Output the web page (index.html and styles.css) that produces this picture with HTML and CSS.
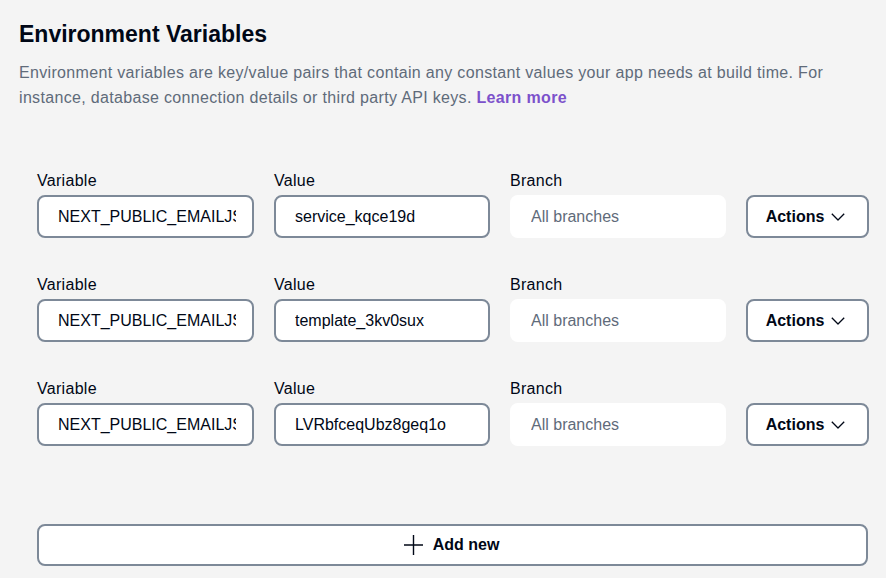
FILE: index.html
```html
<!DOCTYPE html>
<html lang="en">
<head>
<meta charset="utf-8">
<title>Environment Variables</title>
<link rel="stylesheet" href="styles.css">
</head>
<body>
<main class="page">
  <h2 class="title">Environment Variables</h2>
  <p class="desc">Environment variables are key/value pairs that contain any constant values your app needs at build time. For instance, database connection details or third party API keys. <a href="#" class="link">Learn more</a></p>

  <div class="rows">
    <div class="row">
      <div class="field"><label class="label">Variable</label><input class="input" type="text" value="NEXT_PUBLIC_EMAILJS_SERVICE_ID"></div>
      <div class="field"><label class="label">Value</label><input class="input" type="text" value="service_kqce19d"></div>
      <div class="field"><label class="label">Branch</label><input class="input branch" type="text" placeholder="All branches"></div>
      <div class="field action-field"><button class="actions">Actions <svg class="chev" width="14" height="8" viewBox="0 0 14 8"><path d="M0.8 0.8l6.2 6.2 6.2-6.2" fill="none" stroke="#000716" stroke-width="1.3" stroke-linejoin="round"/></svg></button></div>
    </div>
    <div class="row">
      <div class="field"><label class="label">Variable</label><input class="input" type="text" value="NEXT_PUBLIC_EMAILJS_TEMPLATE_ID"></div>
      <div class="field"><label class="label">Value</label><input class="input" type="text" value="template_3kv0sux"></div>
      <div class="field"><label class="label">Branch</label><input class="input branch" type="text" placeholder="All branches"></div>
      <div class="field action-field"><button class="actions">Actions <svg class="chev" width="14" height="8" viewBox="0 0 14 8"><path d="M0.8 0.8l6.2 6.2 6.2-6.2" fill="none" stroke="#000716" stroke-width="1.3" stroke-linejoin="round"/></svg></button></div>
    </div>
    <div class="row">
      <div class="field"><label class="label">Variable</label><input class="input" type="text" value="NEXT_PUBLIC_EMAILJS_PUBLIC_KEY"></div>
      <div class="field"><label class="label">Value</label><input class="input" type="text" value="LVRbfceqUbz8geq1o"></div>
      <div class="field"><label class="label">Branch</label><input class="input branch" type="text" placeholder="All branches"></div>
      <div class="field action-field"><button class="actions">Actions <svg class="chev" width="14" height="8" viewBox="0 0 14 8"><path d="M0.8 0.8l6.2 6.2 6.2-6.2" fill="none" stroke="#000716" stroke-width="1.3" stroke-linejoin="round"/></svg></button></div>
    </div>
  </div>

  <button class="add"><svg class="plus" width="19" height="20" viewBox="0 0 19 20"><path d="M9.5 0v20M0 10h19" stroke="#000716" stroke-width="1.4" fill="none"/></svg>Add new</button>
</main>
</body>
</html>
```
FILE: styles.css
```css
* { box-sizing: border-box; }
html, body { margin: 0; padding: 0; }
body {
  background: #f4f4f4;
  font-family: "Liberation Sans", Arial, sans-serif;
  color: #000716;
  width: 886px;
  height: 578px;
  overflow: hidden;
}
.page {
  padding: 19px 0 0 19px;
}
.title {
  margin: 0;
  font-size: 23px;
  line-height: 30px;
  font-weight: 700;
  color: #000716;
}
.desc {
  margin: 11px 0 0 0;
  width: 840px;
  font-size: 16px;
  line-height: 25px;
  letter-spacing: 0.33px;
  color: #5f6b7a;
}
.link {
  color: #7c51cb;
  font-weight: 700;
  text-decoration: none;
}
.rows {
  margin: 59px 0 0 18px;
  display: flex;
  flex-direction: column;
  gap: 35px;
}
.row {
  display: grid;
  grid-template-columns: 217px 216px 216px 123px;
  column-gap: 20px;
}
.field {
  display: flex;
  flex-direction: column;
  gap: 3px;
}
.label {
  font-size: 16px;
  line-height: 23px;
  letter-spacing: 0.3px;
  color: #000716;
}
.input {
  height: 43px;
  width: 100%;
  border: 2px solid #7d8998;
  border-radius: 8px;
  background: #fff;
  padding: 0 16px 0 19px;
  font-family: inherit;
  font-size: 16px;
  color: #000716;
  outline: none;
}
.input.branch {
  border-color: #ffffff;
}
.input.branch::placeholder {
  color: #5f6b7a;
  opacity: 1;
}
.action-field {
  justify-content: flex-end;
}
.actions {
  height: 43px;
  width: 123px;
  border: 2px solid #7d8998;
  border-radius: 8px;
  background: #fff;
  font-family: inherit;
  font-size: 16px;
  font-weight: 700;
  color: #000716;
  display: flex;
  align-items: center;
  justify-content: center;
  gap: 7px;
  padding: 0 4px 0 0;
}
.chev { display: block; }
.add {
  margin: 78px 0 0 18px;
  width: 831px;
  height: 42px;
  border: 2px solid #7d8998;
  border-radius: 8px;
  background: #fff;
  font-family: inherit;
  font-size: 16px;
  font-weight: 700;
  color: #000716;
  display: flex;
  align-items: center;
  justify-content: center;
  gap: 10px;
  padding: 0 2px 0 0;
}
.plus { display: block; }
```
